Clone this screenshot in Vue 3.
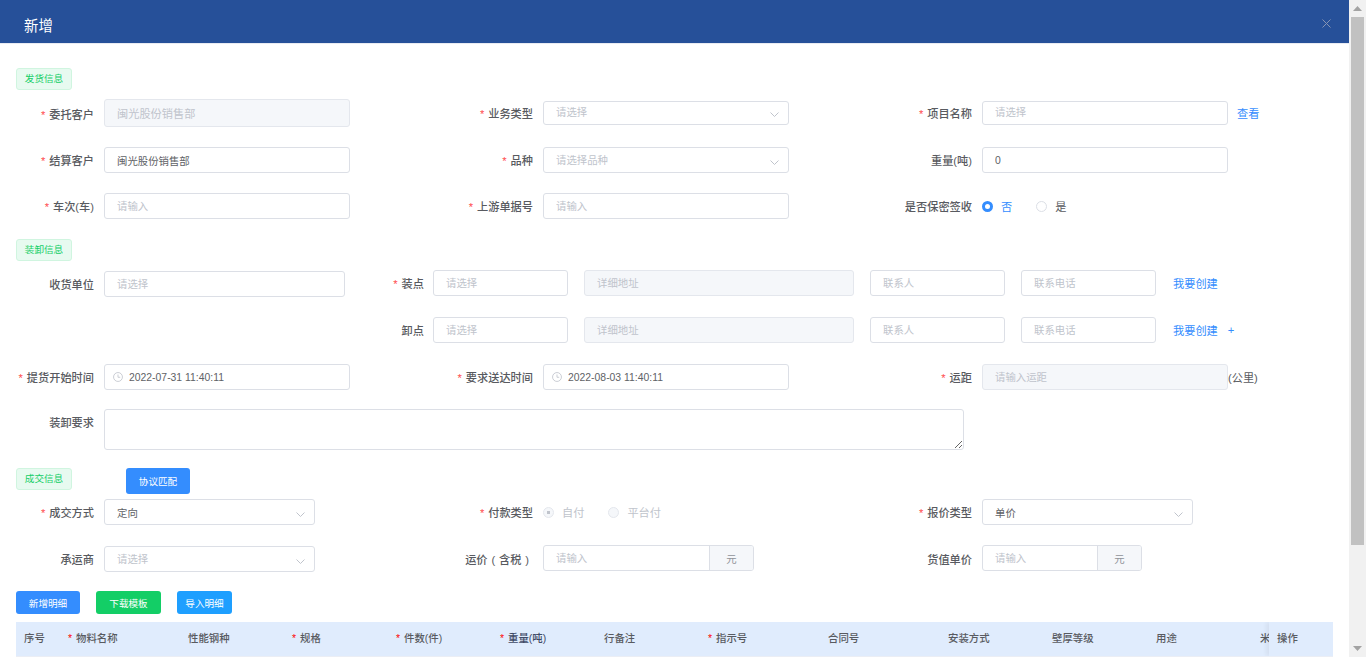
<script setup>
// 明细表头（宽度按设计稿列宽）
const columns = [
  { title: '序号', width: 44 },
  { title: '物料名称', width: 120, required: true },
  { title: '性能钢种', width: 104 },
  { title: '规格', width: 104, required: true },
  { title: '件数(件)', width: 104, required: true },
  { title: '重量(吨)', width: 104, required: true, dark: true },
  { title: '行备注', width: 104 },
  { title: '指示号', width: 120, required: true },
  { title: '合同号', width: 120 },
  { title: '安装方式', width: 104 },
  { title: '壁厚等级', width: 104 },
  { title: '用途', width: 104 },
  { title: '米', width: 104 }
]
</script>

<template>
  <div class="page">
    <div class="dialog">
      <header class="head">
        <span class="title">新增</span>
        <svg class="close" width="9" height="9" viewBox="0 0 9 9">
          <path d="M0.5 0.5L8.5 8.5M8.5 0.5L0.5 8.5" />
        </svg>
      </header>

      <div class="body">
        <!-- 发货信息 -->
        <div class="tag">发货信息</div>
        <div class="row mt10">
          <div class="field">
            <label class="label"><i>*</i>委托客户</label>
            <div class="inp disabled tall"><input class="big" value="闽光股份销售部" readonly /></div>
          </div>
          <div class="field">
            <label class="label"><i>*</i>业务类型</label>
            <div class="inp short">
              <input placeholder="请选择" readonly />
              <svg class="arrow" width="9" height="5" viewBox="0 0 9 5"><path d="M0.5 0.5L4.5 4.5L8.5 0.5" /></svg>
            </div>
          </div>
          <div class="field">
            <label class="label"><i>*</i>项目名称</label>
            <div class="inp short"><input placeholder="请选择" readonly /></div>
            <a class="link view">查看</a>
          </div>
        </div>
        <div class="row mt21">
          <div class="field">
            <label class="label"><i>*</i>结算客户</label>
            <div class="inp"><input value="闽光股份销售部" readonly /></div>
          </div>
          <div class="field">
            <label class="label"><i>*</i>品种</label>
            <div class="inp">
              <input placeholder="请选择品种" readonly />
              <svg class="arrow" width="9" height="5" viewBox="0 0 9 5"><path d="M0.5 0.5L4.5 4.5L8.5 0.5" /></svg>
            </div>
          </div>
          <div class="field">
            <label class="label">重量(吨)</label>
            <div class="inp"><input value="0" readonly /></div>
          </div>
        </div>
        <div class="row mt20">
          <div class="field">
            <label class="label"><i>*</i>车次(车)</label>
            <div class="inp"><input placeholder="请输入" readonly /></div>
          </div>
          <div class="field">
            <label class="label"><i>*</i>上游单据号</label>
            <div class="inp"><input placeholder="请输入" readonly /></div>
          </div>
          <div class="field">
            <label class="label">是否保密签收</label>
            <div class="radios">
              <span class="radio on"><b></b>否</span>
              <span class="radio"><b></b>是</span>
            </div>
          </div>
        </div>

        <!-- 装卸信息 -->
        <div class="tag mt20">装卸信息</div>
        <div class="stop-row mt9">
          <div class="field consignee">
            <label class="label">收货单位</label>
            <div class="inp w241"><input placeholder="请选择" readonly /></div>
          </div>
          <div class="stop">
            <label class="stop-label"><i>*</i>装点</label>
            <div class="inp w135"><input placeholder="请选择" readonly /></div>
            <div class="inp w270 disabled"><input placeholder="详细地址" readonly /></div>
            <div class="inp w135"><input placeholder="联系人" readonly /></div>
            <div class="inp w135"><input placeholder="联系电话" readonly /></div>
            <a class="link create">我要创建</a>
          </div>
        </div>
        <div class="stop-row mt20">
          <div class="consignee"></div>
          <div class="stop">
            <label class="stop-label">卸点</label>
            <div class="inp w135"><input placeholder="请选择" readonly /></div>
            <div class="inp w270 disabled"><input placeholder="详细地址" readonly /></div>
            <div class="inp w135"><input placeholder="联系人" readonly /></div>
            <div class="inp w135"><input placeholder="联系电话" readonly /></div>
            <a class="link create">我要创建</a>
            <a class="link plus">+</a>
          </div>
        </div>
        <div class="row mt20">
          <div class="field">
            <label class="label"><i>*</i>提货开始时间</label>
            <div class="inp date">
              <svg class="clock" width="10" height="10" viewBox="0 0 18 18">
                <circle cx="9" cy="9" r="8" />
                <path d="M9 4.5V9.5H13" />
              </svg>
              <input value="2022-07-31 11:40:11" readonly />
            </div>
          </div>
          <div class="field">
            <label class="label"><i>*</i>要求送达时间</label>
            <div class="inp date">
              <svg class="clock" width="10" height="10" viewBox="0 0 18 18">
                <circle cx="9" cy="9" r="8" />
                <path d="M9 4.5V9.5H13" />
              </svg>
              <input value="2022-08-03 11:40:11" readonly />
            </div>
          </div>
          <div class="field">
            <label class="label"><i>*</i>运距</label>
            <div class="inp disabled"><input placeholder="请输入运距" readonly /></div>
            <span class="unit">(公里)</span>
          </div>
        </div>
        <div class="remark mt19">
          <label class="label">装卸要求</label>
          <textarea readonly></textarea>
        </div>

        <!-- 成交信息 -->
        <div class="deal-head mt18">
          <div class="tag">成交信息</div>
          <button class="btn primary match">协议匹配</button>
        </div>
        <div class="row mt5">
          <div class="field">
            <label class="label"><i>*</i>成交方式</label>
            <div class="inp w211">
              <input value="定向" readonly />
              <svg class="arrow" width="9" height="5" viewBox="0 0 9 5"><path d="M0.5 0.5L4.5 4.5L8.5 0.5" /></svg>
            </div>
          </div>
          <div class="field">
            <label class="label"><i>*</i>付款类型</label>
            <div class="radios">
              <span class="radio off checked"><b></b>自付</span>
              <span class="radio off"><b></b>平台付</span>
            </div>
          </div>
          <div class="field">
            <label class="label"><i>*</i>报价类型</label>
            <div class="inp w211">
              <input value="单价" readonly />
              <svg class="arrow" width="9" height="5" viewBox="0 0 9 5"><path d="M0.5 0.5L4.5 4.5L8.5 0.5" /></svg>
            </div>
          </div>
        </div>
        <div class="row mt21">
          <div class="field">
            <label class="label">承运商</label>
            <div class="inp w211">
              <input placeholder="请选择" readonly />
              <svg class="arrow" width="9" height="5" viewBox="0 0 9 5"><path d="M0.5 0.5L4.5 4.5L8.5 0.5" /></svg>
            </div>
          </div>
          <div class="field">
            <label class="label wide">运价 ( 含税 )&nbsp;</label>
            <div class="inp w211 has-append">
              <input placeholder="请输入" readonly />
              <span class="append">元</span>
            </div>
          </div>
          <div class="field">
            <label class="label">货值单价</label>
            <div class="inp w160 has-append">
              <input placeholder="请输入" readonly />
              <span class="append">元</span>
            </div>
          </div>
        </div>

        <div class="actions">
          <button class="btn primary w64">新增明细</button>
          <button class="btn success w65">下载模板</button>
          <button class="btn info w55">导入明细</button>
        </div>

        <div class="table">
          <div class="thead">
            <div
              v-for="col in columns"
              :key="col.title"
              class="th"
              :class="{ dark: col.dark }"
              :style="{ width: col.width + 'px' }"
            >
              <i v-if="col.required">*</i>{{ col.title }}
            </div>
          </div>
          <div class="th fixed">操作</div>
        </div>
      </div>
    </div>

    <div class="scrollbar">
      <svg class="tri" width="9" height="5" viewBox="0 0 9 5"><path d="M4.5 0L9 5H0Z" /></svg>
      <div class="track">
        <div class="thumb"></div>
      </div>
      <svg class="tri" width="9" height="5" viewBox="0 0 9 5"><path d="M0 0H9L4.5 5Z" /></svg>
    </div>
  </div>
</template>

<style>
html,
body {
  margin: 0;
  overflow: hidden;
}
</style>

<style scoped>
.page {
  display: flex;
  width: 1366px;
  height: 657px;
  overflow: hidden;
  background: #fff;
  font-family: "Liberation Sans", "Noto Sans CJK SC", sans-serif;
  font-size: 11.2px;
  color: #585a60;
}

.dialog {
  width: 1349px;
  flex: none;
  display: flex;
  flex-direction: column;
}

.head {
  flex: none;
  height: 44px;
  background: #265099;
  border-bottom: 1px solid #e8ebf2;
  box-sizing: border-box;
  display: flex;
  align-items: center;
  justify-content: space-between;
  padding: 5px 18px 0 24px;
}

.title {
  color: #fff;
  font-size: 14.4px;
}

.close {
  margin-top: -2px;
}

.close path {
  stroke: #8694b3;
  stroke-width: 1;
  fill: none;
}

.body {
  padding: 24px 16px 0;
}

.mt5 { margin-top: 5px; }
.mt9 { margin-top: 9px; }
.mt10 { margin-top: 10px; }
.mt18 { margin-top: 18px; }
.mt19 { margin-top: 19px; }
.mt20 { margin-top: 20px; }
.mt21 { margin-top: 21px; }

.tag {
  width: 56px;
  height: 22px;
  box-sizing: border-box;
  border: 1px solid #d0f5e0;
  border-radius: 3px;
  background: #e7faf0;
  color: #13ce66;
  font-size: 9.6px;
  line-height: 20px;
  text-align: center;
}

.row {
  display: grid;
  grid-template-columns: repeat(3, 439px);
  height: 26px;
  align-items: center;
}

.field {
  display: flex;
  align-items: center;
}

.label {
  flex: none;
  width: 78px;
  margin-right: 10px;
  text-align: right;
  white-space: nowrap;
  font-weight: 500;
}

.wide {
  word-spacing: 0.8px;
}

i {
  font-style: normal;
  color: #ff4d4f;
  margin-right: 4px;
}

.inp {
  flex: none;
  width: 246px;
  height: 25.6px;
  box-sizing: border-box;
  border: 1px solid #dcdfe6;
  border-radius: 3px;
  background: #fff;
  display: flex;
  align-items: center;
  position: relative;
  overflow: hidden;
}

.inp input {
  flex: 1;
  min-width: 0;
  height: 100%;
  padding: 0 12px;
  border: 0;
  outline: 0;
  background: transparent;
  font: inherit;
  font-size: 10.4px;
  color: #606266;
}

.inp input::placeholder {
  color: #c0c4cc;
}

.inp .big {
  font-size: 11.2px;
}

.disabled {
  background: #f5f7fa;
  border-color: #e4e7ed;
}

.disabled input {
  color: #c0c4cc;
}

.tall {
  height: 28px;
  margin-top: -1px;
}

.short {
  height: 24.4px;
  margin-top: -1px;
}

.w135 { width: 135px; }
.w160 { width: 160px; }
.w211 { width: 211px; }
.w241 { width: 241px; }
.w270 { width: 270px; }

.arrow {
  flex: none;
  margin: 4px 9px 0 0;
}

.arrow path {
  stroke: #c0c4cc;
  stroke-width: 1;
  fill: none;
}

.date {
  padding-left: 8px;
}

.date input {
  padding-left: 6px;
}

.clock {
  flex: none;
}

.clock circle,
.clock path {
  stroke: #c0c4cc;
  stroke-width: 1.5;
  fill: none;
}

.link {
  color: #348dfe;
  white-space: nowrap;
}

.view {
  margin-left: 9px;
}

.unit {
  white-space: nowrap;
}

.radios {
  display: flex;
  gap: 24px;
}

.radio {
  display: flex;
  align-items: center;
  gap: 8px;
}

.radio b {
  width: 11px;
  height: 11px;
  box-sizing: border-box;
  border: 1px solid #dcdfe6;
  border-radius: 50%;
  background: #fff;
}

.radio.on {
  color: #348dfe;
}

.radio.on b {
  border: 3.5px solid #348dfe;
}

.radio.off {
  color: #c0c4cc;
}

.radio.off b {
  background: #f5f7fa;
  border-color: #e4e7ed;
}

.radio.checked b {
  background: radial-gradient(circle, #c0c4cc 1.5px, #f5f7fa 2px);
}

.stop-row {
  display: flex;
  height: 27px;
}

.consignee {
  flex: none;
  width: 329px;
  align-self: flex-end;
}

.stop {
  display: flex;
  align-items: center;
  gap: 16px;
  height: 26px;
}

.stop-label {
  flex: none;
  width: 79px;
  margin-right: -7px;
  text-align: right;
  white-space: nowrap;
  font-weight: 500;
}

.create {
  margin-left: 1px;
}

.plus {
  margin-left: -6px;
}

.remark {
  display: flex;
  align-items: flex-start;
}

.remark .label {
  line-height: 28px;
}

textarea {
  display: block;
  width: 860px;
  height: 41px;
  box-sizing: border-box;
  border: 1px solid #dcdfe6;
  border-radius: 3px;
  outline: 0;
  resize: vertical;
}

.deal-head {
  display: flex;
  align-items: flex-start;
  gap: 54px;
}

.has-append {
  margin-top: -2px;
}

.has-append input {
  padding-right: 0;
}

.append {
  flex: none;
  align-self: stretch;
  width: 43px;
  border-left: 1px solid #dcdfe6;
  background: #f5f7fa;
  display: flex;
  align-items: center;
  justify-content: center;
  font-size: 10.4px;
  color: #909399;
}

.btn {
  height: 23px;
  padding: 0;
  border: 0;
  border-radius: 3px;
  color: #fff;
  font: inherit;
  font-size: 9.6px;
}

.primary { background: #348dfe; }
.success { background: #13ce66; }
.info { background: #1e9fff; }

.match {
  width: 64px;
  height: 26px;
}

.w64 { width: 64px; }
.w65 { width: 65px; }
.w55 { width: 55px; }

.actions {
  display: flex;
  gap: 16px;
  margin-top: 19px;
}

.table {
  position: relative;
  margin-top: 8px;
  width: 1317px;
  height: 35px;
  overflow: hidden;
  background: #e0ecfd;
  border-bottom: 1px solid #ebeef5;
  box-sizing: border-box;
}

.thead {
  display: flex;
  height: 100%;
}

.th {
  flex: none;
  box-sizing: border-box;
  padding-left: 8px;
  font-size: 10.4px;
  line-height: 34px;
  white-space: nowrap;
  font-weight: 500;
}

.th i {
  color: #f00;
}

.dark {
  color: #3f4a66;
}

.fixed {
  position: absolute;
  top: 0;
  right: 0;
  bottom: 0;
  width: 64px;
  background: #e0ecfd;
  box-shadow: -3px 0 4px rgba(0, 0, 0, 0.05);
}

.scrollbar {
  flex: none;
  width: 17px;
  background: #f1f1f1;
  display: flex;
  flex-direction: column;
  align-items: center;
  padding: 6px 0;
  box-sizing: border-box;
}

.tri {
  flex: none;
  fill: #a3a3a3;
}

.track {
  flex: 1;
  align-self: stretch;
  margin: 6px 0;
}

.thumb {
  width: 13px;
  height: 528px;
  margin-left: 2px;
  background: #c1c1c1;
}
</style>
